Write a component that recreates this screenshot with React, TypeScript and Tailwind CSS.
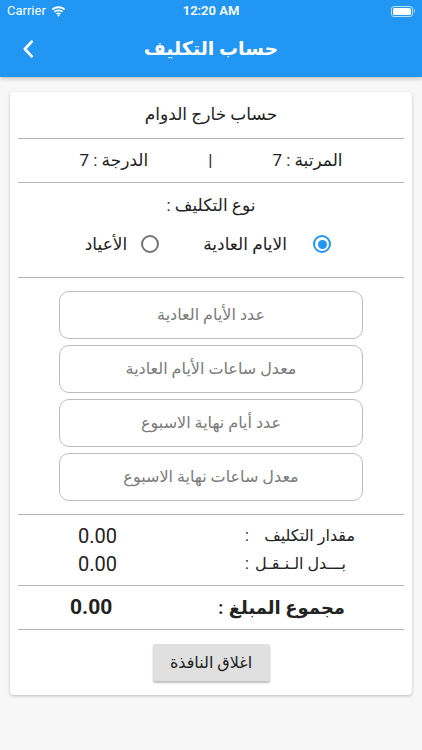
import React from 'react';

const font = "font-['Roboto','DejaVu_Sans',sans-serif]";

const StatusBar = () => (
  <div className="relative flex h-[22px] items-center px-[7px] text-white">
    <div className="flex items-center gap-[5px] text-[13px] font-['Roboto',sans-serif]">
      <span>Carrier</span>
      <svg width="15" height="11" viewBox="0 0 15 11" fill="white">
        <path d="M7.5 2.2c2.1 0 4 .8 5.5 2.1l1.3-1.3C12.5 1.3 10.1.3 7.5.3S2.5 1.3.7 3l1.3 1.3C3.5 3 5.4 2.2 7.5 2.2z" />
        <path d="M7.5 5.3c1.3 0 2.4.5 3.3 1.2l1.3-1.3C10.9 4.1 9.3 3.4 7.5 3.4s-3.4.7-4.6 1.8l1.3 1.3c.9-.7 2-1.2 3.3-1.2z" />
        <path d="M7.5 8.4c.5 0 .9.2 1.2.4l1.3-1.3c-.7-.6-1.6-1-2.5-1s-1.8.4-2.5 1l1.3 1.3c.3-.2.7-.4 1.2-.4zM6.3 9.6 7.5 10.8 8.7 9.6c-.3-.3-.7-.5-1.2-.5s-.9.2-1.2.5z" />
      </svg>
    </div>
    <div className="absolute left-0 right-0 text-center text-[13px] font-semibold font-['Roboto',sans-serif] pointer-events-none">
      12:20 AM
    </div>
    <div className="ml-auto flex items-center gap-[1px]">
      <div className="flex h-[11px] w-[22px] items-center rounded-[3px] border border-white/70 p-[1px]">
        <div className="h-full w-full rounded-[1.5px] bg-white" />
      </div>
      <div className="h-[4px] w-[1.5px] rounded-r bg-white/60" />
    </div>
  </div>
);

const Divider = () => <div className="h-px bg-[#b5b5b5]" />;

const Radio = ({ checked }: { checked: boolean }) => (
  <div
    className={
      checked
        ? 'flex h-[18px] w-[18px] items-center justify-center rounded-full border-2 border-[#2196f3]'
        : 'flex h-[18px] w-[18px] items-center justify-center rounded-full border-2 border-[#737373]'
    }
  >
    {checked && <div className="h-[9px] w-[9px] rounded-full bg-[#2196f3]" />}
  </div>
);

const inputs = ['عدد الأيام العادية', 'معدل ساعات الأيام العادية', 'عدد أيام نهاية الاسبوع', 'معدل ساعات نهاية الاسبوع'];

export default function App() {
  return (
    <div className={`min-h-screen bg-[#f7f7f7] ${font}`}>
      <div className="bg-[#2196f3] shadow-[0_2px_4px_rgba(0,0,0,0.2)]">
        <StatusBar />
        <div className="relative flex h-[55px] items-center justify-center">
          <button className="absolute left-[18px] top-[16px] text-white">
            <svg width="22" height="22" viewBox="0 0 24 24" fill="none" stroke="white" strokeWidth="3" strokeLinecap="round" strokeLinejoin="round">
              <path d="M15 4 7.5 12 15 20" />
            </svg>
          </button>
          <h1 dir="rtl" className="text-[19px] font-bold text-white">حساب التكليف</h1>
        </div>
      </div>

      <div dir="rtl" className="mx-[10px] mt-[15px] rounded-[4px] bg-white px-[8px] text-[#222] shadow-[0_1px_3px_rgba(0,0,0,0.25)]">
        <div className="flex h-[46px] items-center justify-center text-[17px]">حساب خارج الدوام</div>
        <Divider />
        <div className="flex h-[43px] items-center justify-center gap-[60px] text-[17px]">
          <span>المرتبة : 7</span>
          <span>|</span>
          <span>الدرجة : 7</span>
        </div>
        <Divider />
        <div className="flex h-[94px] flex-col items-center pt-[10px]">
          <div className="text-[17px]">نوع التكليف :</div>
          <div className="mt-[13px] flex w-full items-center pr-[73px] text-[17px]">
            <Radio checked />
            <span className="mr-[26px]">الايام العادية</span>
            <span className="mr-[44px]">
              <Radio checked={false} />
            </span>
            <span className="mr-[14px]">الأعياد</span>
          </div>
        </div>
        <Divider />
        <div className="flex flex-col items-center gap-[6px] py-[13px]">
          {inputs.map((t) => (
            <div
              key={t}
              className="flex h-[48px] w-[304px] items-center justify-center rounded-[10px] border border-[#bdbdbd] text-[16px] text-[#7a7a7a]"
            >
              {t}
            </div>
          ))}
        </div>
        <Divider />
        <div className="py-[7px] text-[16px]">
          <div className="flex h-[28px] items-center pr-[49px]">
            <span className="min-w-[100px] whitespace-nowrap">مقدار التكليف</span>
            <span className="w-[16px] text-center">:</span>
            <span className="ml-[60px] mr-auto font-['Roboto',sans-serif] text-[20px]">0.00</span>
          </div>
          <div className="flex h-[28px] items-center pr-[58px]">
            <span className="min-w-[91px] whitespace-nowrap">بـــدل الـنـقـل</span>
            <span className="w-[16px] text-center">:</span>
            <span className="ml-[60px] mr-auto font-['Roboto',sans-serif] text-[20px]">0.00</span>
          </div>
        </div>
        <Divider />
        <div className="flex h-[43px] items-center pr-[59px] text-[18px] font-bold">
          <span className="min-w-[110px] whitespace-nowrap">مجموع المبلغ</span>
          <span className="w-[16px] text-center">:</span>
          <span className="ml-[52px] mr-auto font-['Roboto',sans-serif] text-[21px]">0.00</span>
        </div>
        <Divider />
        <div className="flex justify-center py-[14px]">
          <button className="h-[37px] w-[117px] rounded-[2px] bg-[#e0e0e0] text-[16px] text-[#222] shadow-[0_2px_2px_rgba(0,0,0,0.25)]">
            اغلاق النافذة
          </button>
        </div>
      </div>
    </div>
  );
}
